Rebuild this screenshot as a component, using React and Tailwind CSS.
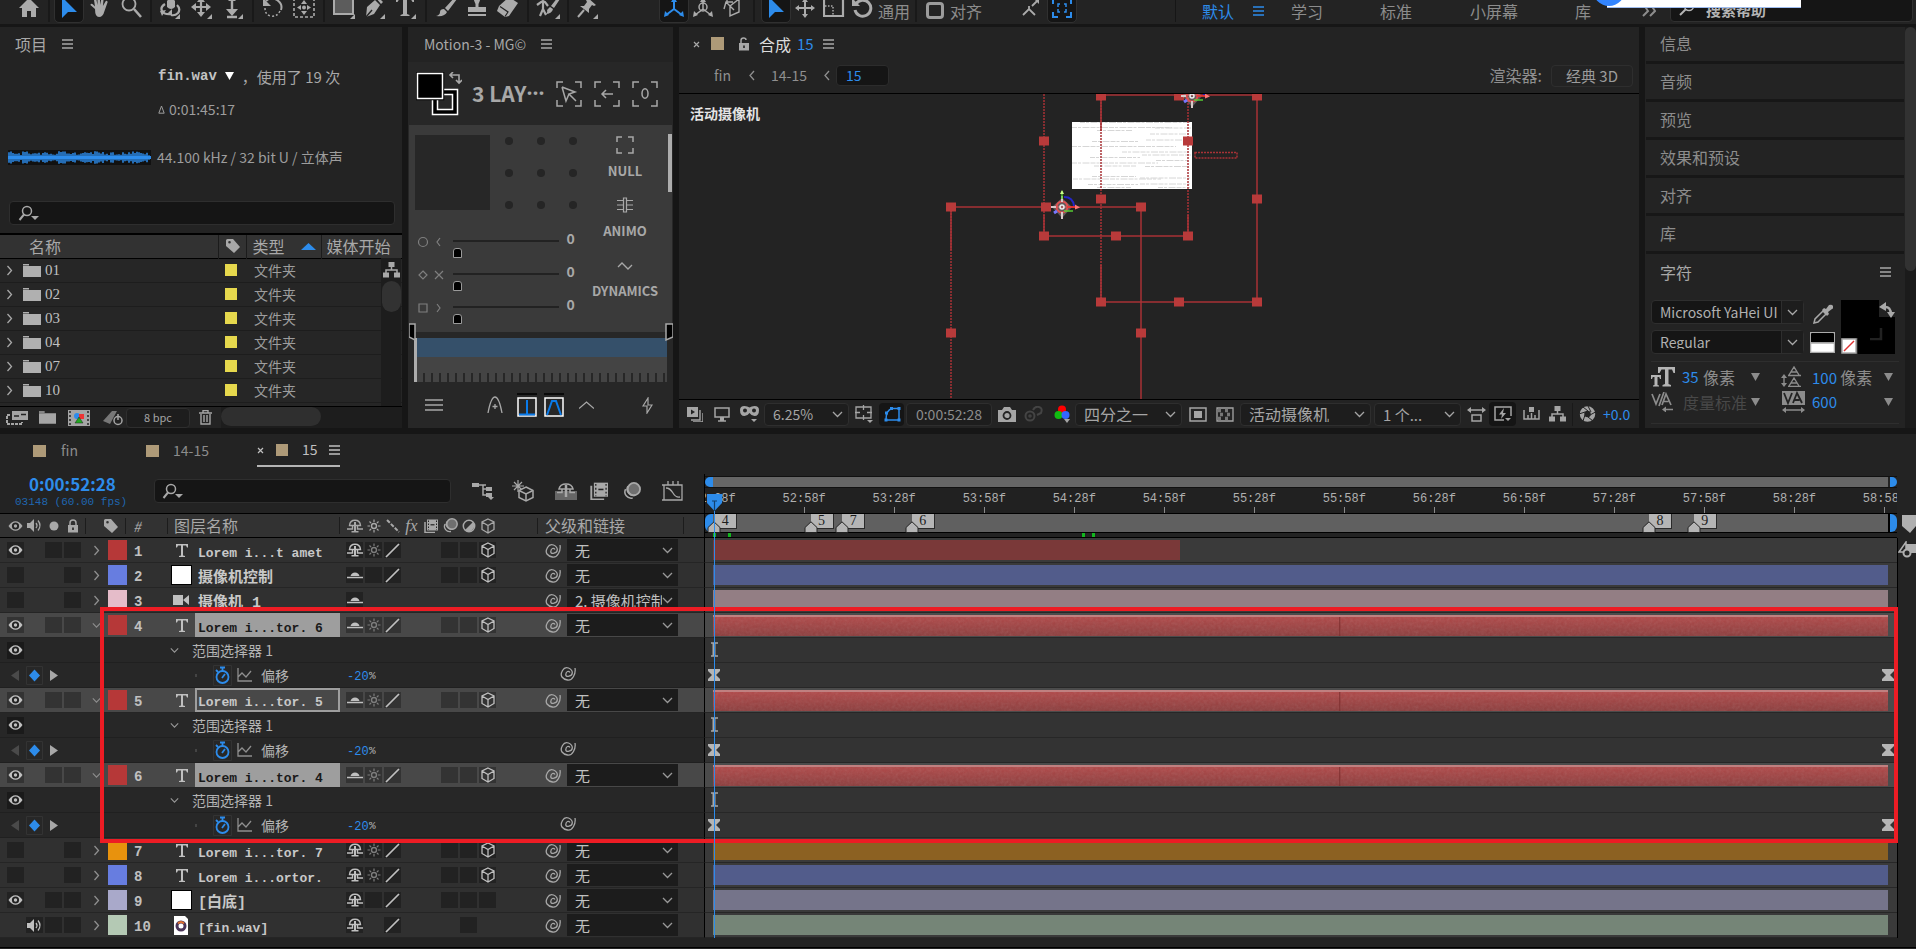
import React from "react";

const SANS = "font-['Noto_Sans_CJK_SC',sans-serif]";
const MONO = "font-['Liberation_Mono','Noto_Sans_CJK_SC',monospace]";

function Svg({ w = 20, h, box, className = "", children }) {
  const height = h || w;
  return (
    <svg
      aria-hidden="true"
      width={w}
      height={height}
      viewBox={box || `0 0 ${w} ${height}`}
      fill="none"
      stroke="currentColor"
      strokeWidth="1.5"
      className={`shrink-0 ${className}`}
    >
      {children}
    </svg>
  );
}
const F = { fill: "currentColor", stroke: "none" };

/* ---------- shared icons ---------- */
const Menu = ({ className = "" }) => (
  <Svg w={11} h={10} className={className}>
    <path d="M0 1h11M0 5h11M0 9h11" strokeWidth="1.4" />
  </Svg>
);
const CloseX = () => (
  <Svg w={7} h={7}>
    <path d="M1 1l5 5M6 1L1 6" strokeWidth="1.2" />
  </Svg>
);
const Chevron = ({ w = 11, className = "" }) => (
  <Svg w={w} h={7} box="0 0 11 7" className={className}>
    <path d="M1 1l4.500 4.500L10 1" strokeWidth="1.3" />
  </Svg>
);
const ChevRight = () => (
  <Svg w={7} h={11}>
    <path d="M1.500 1l4 4.500-4 4.500" strokeWidth="1.3" />
  </Svg>
);
const Tri = () => (
  <Svg w={9} h={8}>
    <path d="M0 0h9L4.500 8z" {...F} />
  </Svg>
);
const SearchDrop = () => (
  <Svg w={22} h={16}>
    <circle cx="9" cy="6" r="4.500" />
    <path d="M6 9.500L1.500 15" strokeWidth="2" />
    <path d="M13 11h8l-4 4z" {...F} />
  </Svg>
);
const Tag = () => (
  <Svg w={16} h={16}>
    <path fillRule="evenodd" d="M1 2.500Q1 1 2.500 1H8l7 8-6 6-8-7zM4.500 3a1.300 1.300 0 1 0 0 2.600 1.300 1.300 0 0 0 0-2.600z" {...F} />
  </Svg>
);
const Eye = () => (
  <Svg w={15} h={12}>
    <path d="M.5 6Q3.500 1.200 7.500 1.200T14.500 6Q11.500 10.800 7.500 10.800T.5 6z" {...F} />
    <circle cx="7.500" cy="6" r="3.600" fill="#222" stroke="none" />
    <circle cx="7.500" cy="6" r="1.700" {...F} />
  </Svg>
);
const Speaker = () => (
  <Svg w={17} h={15}>
    <path d="M1 5h3l4-4v13l-4-4H1z" {...F} />
    <path d="M10 5q2 2.500 0 5M12 2.500q4 5 0 10" strokeWidth="1.300" />
  </Svg>
);
const Lock = ({ open }) => (
  <Svg w={12} h={14}>
    <path d="M1 6h10v7.500H1z" {...F} />
    <path d={open ? "M3 6V3.500Q3 1 5.500 1T8 3" : "M3 6V4q0-3 3-3t3 3v2"} />
    <path d="M6 8.500v2.500" stroke="#222" strokeWidth="1.600" />
  </Svg>
);
const Shy = ({ flat }) => (
  <Svg w={16} h={14}>
    {flat ? (
      <>
        <path d="M3.500 8q1-3.500 4.500-3.500T12.500 8z" {...F} />
        <path d="M0 9.500h16" />
      </>
    ) : (
      <>
        <path d="M2.500 6.500Q3 1.200 8 1.200t5.500 5.300z" strokeWidth="1.400" />
        <path d="M8 3v9" strokeWidth="2" />
        <path d="M0 10h5.500V6.500M16 10h-5.500V6.500M4.500 12.800h7" strokeWidth="1.400" />
      </>
    )}
  </Svg>
);
const Sun = ({ dim }) => (
  <Svg w={14} className={dim ? "text-[#7d7d7d]" : ""}>
    <circle cx="7" cy="7" r="2.500" strokeWidth="1.400" />
    <path d="M7 .5v2.500M7 11v2.500M.5 7H3M11 7h2.500M2.500 2.500l1.600 1.600M9.900 9.900l1.600 1.600M2.500 11.500l1.600-1.600M9.900 4.100l1.600-1.600" strokeWidth="1.200" />
  </Svg>
);
const Slash = () => (
  <Svg w={15} h={15}>
    <path d="M1 14L14 1" strokeWidth="1.700" />
  </Svg>
);
const Cube = ({ w = 16 }) => (
  <Svg w={w} box="0 0 16 16">
    <path d="M8 1l6 3v7.500L8 15l-6-3.500V4zM2 4l6 3.500L14 4M8 7.500V15" strokeWidth="1.300" />
  </Svg>
);
const Film = ({ w = 14 }) => (
  <Svg w={w} h={w} box="0 0 14 14">
    <path d="M3 .5h11v11H3z" {...F} />
    <path d="M1 3v10.500h10" strokeWidth="1.500" />
    <path d="M4.500 1.500v9.500M12.500 1.500v9.500" stroke="#222" strokeDasharray="1.500 1.500" strokeWidth="1" />
    <path d="M6.500 5.800h4" stroke="#222" strokeWidth="1.200" />
  </Svg>
);
const Blur = ({ w = 16 }) => (
  <Svg w={w} box="0 0 16 16">
    <circle cx="10" cy="6" r="5.200" fill="#6f6f6f" />
    <path d="M5 3.500A5.300 5.300 0 0 0 11.500 11M3 6A5.300 5.300 0 0 0 9 13.500" strokeWidth="1.300" />
  </Svg>
);
const Adjust = () => (
  <Svg w={14}>
    <circle cx="7" cy="7" r="5.700" />
    <path d="M11 3A5.700 5.700 0 0 1 3 11z" {...F} />
  </Svg>
);
const Spiral = () => (
  <Svg w={16} h={15}>
    <path d="M10 6.500Q9 5 7.500 5.500T5.800 8.500 9 10.200 12.300 6.500 8.500 2 2.500 4.500 2 11 7.500 14 13.500 10.500 15 2" strokeWidth="1.300" />
  </Svg>
);
const Folder = ({ w = 18 }) => (
  <Svg w={w} h={15} box="0 0 18 15">
    <path d="M0 1h6v1.500H0zM0 3h18v11H0z" {...F} />
  </Svg>
);
const Tree = () => (
  <Svg w={17} h={16}>
    <path d="M5.500 0h6v5h-6zM0 10.500h6v5H0zM11 10.500h6v5h-6z" {...F} />
    <path d="M8.500 5v3M3 11V8h11v3" />
  </Svg>
);
const Pointer = ({ blue }) => (
  <Svg w={20} h={22} className={blue ? "text-[#2d8ceb]" : ""}>
    <path d="M3 0v21l6-6h9z" {...F} />
  </Svg>
);
const FourWay = () => (
  <Svg w={20}>
    <path d="M10 3v14M3 10h14" strokeWidth="2" />
    <path d="M10 0l3 4H7zM10 20l3-4H7zM0 10l4-3v6zM20 10l-4-3v6z" {...F} />
  </Svg>
);
const Corner = () => <path d="M21 22v-5l-5 5z" {...F} />;

/* ---------- top toolbar ---------- */
const TOOLS = [
  ["主页", <Svg w={22}><path d="M11 1l10 10h-3v9h-5v-6H9v6H4v-9H1z" {...F} /></Svg>],
  null,
  ["选取工具", <Pointer blue />, true],
  ["手形工具", <Svg w={22}><path d="M6 12L2 8.500Q1 7.500 2 7t2 .5l2 2L5 3q0-1.300 1-1.300T7.500 3l1 5V1.500Q8.500 0 9.800 0T11 1.500V8l1.300-6q.2-1.200 1.300-1t1 1.300L13.900 9l2.600-4.500q.6-1 1.500-.5t.5 1.500l-3 8.500q-1.500 6-5.500 6t-4-8z" {...F} /></Svg>],
  ["缩放工具", <Svg w={22}><circle cx="9" cy="7" r="6.500" strokeWidth="1.800" /><path d="M14 12l7 8" strokeWidth="2.500" /></Svg>],
  null,
  ["绕光标旋转工具", <Svg w={24} h={22}><path d="M8 4q4-5 8 0v6q-4 4-8 0z" {...F} /><path d="M6 7q-5 3-3 7t10 3M18 8q4 4 1 8-3 3-7 2" strokeWidth="2.200" /><path d="M13 12v7l-4-3zM1 14l6-1-4 6z" {...F} /><Corner /></Svg>],
  ["在光标下移动工具", <Svg w={22}><path d="M10 2v16M2 10h16" strokeWidth="2.200" /><path d="M10 0l4 5H6zM10 20l4-5H6zM0 10l5-4v8zM20 10l-5-4v8z" {...F} /><Corner /></Svg>],
  ["向光标方向推拉镜头工具", <Svg w={22}><path d="M10 0v14M5 20h10" strokeWidth="2.400" /><path d="M10 19l-6-7h12zM10 0l4 4H6z" {...F} /><Corner /></Svg>],
  null,
  ["旋转工具", <Svg w={22}><path d="M4 4q5-5 11-1t4 10" strokeWidth="2" /><path d="M18 14q-3 6-9 5t-6-8" strokeDasharray="2 2" /><path d="M1 1v8h8z" {...F} /></Svg>],
  ["锚点工具", <Svg w={22}><path d="M1 1h20v19H1z" strokeDasharray="3 2" strokeWidth="1.600" /><path d="M11 3l3 4H8zM11 18l3-4H8zM4 10.500L8 8v5zM18 10.500L14 8v5z" {...F} /><circle cx="11" cy="10.500" r="2" {...F} /></Svg>],
  null,
  ["矩形工具", <Svg w={22}><path d="M1 1h19v16H1z" fill="#5c5c5c" strokeWidth="2" /><path d="M22 22v-5l-5 5z" {...F} /></Svg>],
  ["钢笔工具", <Svg w={22}><path d="M2 20l1-10 8-7 5 5-6 9zM12 1l2-1 5 5-2 2z" {...F} /><path d="M2 20l6-7" stroke="#232323" strokeWidth="1.400" /><Corner /></Svg>],
  ["横排文字工具", <Svg w={22}><path d="M1 0h18v5h-1.500L16 2.500h-4V17l2.500 1v1h-9v-1L8 17V2.500H4L2.500 5H1z" {...F} /><Corner /></Svg>],
  null,
  ["画笔工具", <Svg w={22}><path d="M20 0l2 2-9 12-3-3zM9 12l3 3q-2 5-11 4 4-1 4-4t4-3z" {...F} /></Svg>],
  ["仿制图章工具", <Svg w={22}><path d="M8 0q3-1 6 0 1 2-1.500 7v3H20v5H2v-5h7.500V7Q7 2 8 0zM2 17h18v2H2z" {...F} /></Svg>],
  ["橡皮擦工具", <Svg w={22}><path d="M12 0l9 6-9 13-4 1-8-6 2-5z" {...F} /><path d="M3 9.500l8 5.500-3 4.500" stroke="#232323" strokeWidth="1.200" /></Svg>],
  null,
  ["Roto 笔刷工具", <Svg w={24} h={22}><circle cx="7" cy="2" r="2" {...F} /><path d="M1 8l4-3h4l3 4M7 6v6l-3 7M7 12l3 6" strokeWidth="2.200" /><path d="M22 0l2 2-6 9-3-2zM14 10l3 2q-1 5-8 5 3-1 2-4z" {...F} /><path d="M24 22v-5l-5 5z" {...F} /></Svg>],
  null,
  ["人偶位置控点工具", <Svg w={22}><path d="M10 0l9 8-2 1-2-1-3 4v4L3 9h4l3-4-1-2zM7 13L1 20" {...F} /><path d="M7 13l-6 7" strokeWidth="2" /><Corner /></Svg>],
];

const Sep = () => <span className="mx-[5px] h-6 w-0.5 shrink-0 bg-[#191919]" />;

function ToolButton({ label, active, children }) {
  return (
    <button
      type="button"
      aria-label={label}
      className={`flex h-7 w-7 shrink-0 items-center justify-center rounded-sm ${active ? "bg-[#151515] outline outline-[#303030]" : ""}`}
    >
      {children}
    </button>
  );
}

function Toolbar() {
  return (
    <header className="relative flex h-6 shrink-0 items-end overflow-hidden bg-[#232323] pb-[2px] pl-[15px] text-[#ababab]">
      <nav className="flex w-[645px] shrink-0 items-end">
        {TOOLS.map((t, i) =>
          t ? (
            <span key={i} className={TOOLS[i - 1] ? "ml-[3px]" : ""}>
              <ToolButton label={t[0]} active={t[2]}>{t[1]}</ToolButton>
            </span>
          ) : (
            <Sep key={i} />
          )
        )}
      </nav>
      <div className="flex shrink-0 items-end gap-px">
        <ToolButton label="本地轴模式" active>
          <Svg w={22} className="text-[#2d8ceb]"><path d="M11 3v9l-8 6M11 12l8 6" strokeWidth="2" /><path d="M11 0l3 5H8zM1 20l1-6 4 4zM21 20l-1-6-4 4z" {...F} /></Svg>
        </ToolButton>
        <ToolButton label="世界轴模式">
          <Svg w={22}><circle cx="11" cy="10" r="4" /><path d="M11 3v9l-8 6M11 12l8 6" strokeWidth="1.500" /><path d="M11 0l3 5H8zM1 20l1-6 4 4zM21 20l-1-6-4 4z" {...F} /></Svg>
        </ToolButton>
        <ToolButton label="视图轴模式">
          <Svg w={22}><path d="M3 12L5 5h7M9 9l9-7v13l-9 4zM5 5l8 8M3 2l3 0v3" strokeWidth="1.400" /></Svg>
        </ToolButton>
      </div>
      <span className="mx-[7px] h-6 w-0.5 shrink-0 bg-[#191919]" />
      <div className="flex shrink-0 items-end gap-px">
        <ToolButton label="选择" active><Pointer blue /></ToolButton>
        <ToolButton label="移动"><FourWay /></ToolButton>
        <ToolButton label="缩放"><Svg w={22}><path d="M1 1h19v18H1z" strokeWidth="2.200" /><path d="M2 9h8v9" strokeDasharray="1.500 1.500" /></Svg></ToolButton>
        <ToolButton label="旋转"><Svg w={22}><path d="M4 7a8 8 0 1 1-1 6" strokeWidth="3" /><path d="M0 1v8h8z" {...F} /></Svg></ToolButton>
        <span className="flex h-[22px] items-center pb-px text-base leading-[18px] text-[#8c8c8c]">通用</span>
      </div>
      <Sep />
      <label className="flex h-[22px] shrink-0 items-center gap-1 pb-px pl-1 text-base leading-[18px] text-[#8c8c8c]">
        <input type="checkbox" className="mr-[2px] h-[17px] w-[18px] appearance-none rounded-sm border-[3px] border-[#9b9b9b]" />
        对齐
      </label>
      <div className="flex shrink-0 gap-[2px] pl-[36px]">
        <ToolButton label="对齐边缘"><Svg w={22}><path d="M2 18l6-6 6 6M8 12V9M11 9l6-6" strokeWidth="1.800" /><path d="M12 1h6v6z" {...F} /></Svg></ToolButton>
        <ToolButton label="对齐特征" active>
          <Svg w={20} className="text-[#2d8ceb]"><path d="M1 6V1h5M14 1h5v5M19 14v5h-5M6 19H1v-5" strokeWidth="2" /><path d="M6 9V6h2M12 6h2v3M14 11v3h-2M8 14H6v-3" /></Svg>
        </ToolButton>
      </div>
      <nav className="ml-auto flex h-[22px] shrink-0 items-center border-l border-[#161616] pb-px pl-[26px] text-base leading-[18px] text-[#8c8c8c]">
        <a href="#default" className="w-[51px] text-[#2d8ceb]">默认</a>
        <Menu className="mr-[27px] text-[#2d8ceb]" />
        <a href="#learn" className="w-[89px]">学习</a>
        <a href="#standard" className="w-[90px]">标准</a>
        <a href="#small" className="w-[105px]">小屏幕</a>
        <a href="#lib" className="w-[67px]">库</a>
        <Svg w={14} h={12} className="mr-[14px]"><path d="M1 11l5-5-4-6M8 11l5-5-4-6" strokeWidth="2" /></Svg>
      </nav>
      <label className="flex h-7 w-[243px] shrink-0 items-center gap-3 rounded-sm border border-[#303030] bg-[#151515] px-2 text-[15px] text-[#b4b4b4]">
        <Svg w={15} h={16}><circle cx="10" cy="6" r="4.500" /><path d="M7 9l-6 6" strokeWidth="2" /></Svg>
        <input aria-label="搜索帮助" placeholder="搜索帮助" className="w-full bg-transparent pt-1 font-bold placeholder:text-[#b4b4b4]" />
      </label>
      <span className="mr-[3px]" />
      <span className="absolute top-0 right-[115px] h-[8px] w-[194px] border-b border-[#9fbdf0] bg-white" />
      <span className="absolute -top-[26px] right-[291px] h-8 w-8 rounded-full bg-[#3385ff]" />
    </header>
  );
}

/* ---------- project panel ---------- */
const wave = Array.from({ length: 71 }, (_, i) => {
  const r = Math.abs(Math.sin(i * 12.9898 + 4.1) * 43758.5453) % 1;
  const swell = Math.sin(i * 0.33) + Math.sin(i * 0.71 + 1);
  const a = 2.2 + r * 3.2 + Math.max(0, swell) * 1.2;
  return `M${i * 2 + 1} ${(7.5 - a).toFixed(1)}V${(7.5 + a).toFixed(1)}`;
}).join("");

function ProjectPanel() {
  return (
    <section className="flex w-[402px] shrink-0 flex-col bg-[#232323]">
      <h2 className="flex h-[35px] shrink-0 items-center gap-[15px] pb-[2px] pl-[15px] text-base leading-none">
        项目 <Menu />
      </h2>
      <div className="flex h-[30px] items-center pb-[2px] pl-[158px] text-[14px] leading-none">
        <b className={`${MONO} text-[#c4c4c4]`}>fin.wav</b>
        <span className="mx-2 text-white"><Tri /></span>
        <span className="text-[15px] whitespace-nowrap">，使用了 19 次</span>
      </div>
      <div className="flex h-9 items-center gap-1 pb-[2px] pl-[158px] text-[14px] leading-none text-[#9d9d9d]">
        <Svg w={7} h={9}><path d="M.8 8.200L3.500 1l2.700 7.200z" strokeWidth="1" /></Svg>0:01:45:17
      </div>
      <div className="flex h-[60px] items-center gap-[6px] pb-[2px] pl-2 text-[14px] leading-none text-[#9d9d9d]">
        <span className="bg-[#111] text-[#2d8ceb]">
          <Svg w={143} h={15}><path d={wave} strokeWidth="1.500" /><path d="M0 7.500h143" strokeWidth="3" /></Svg>
        </span>
        <span className="whitespace-nowrap">44.100 kHz / 32 bit U / 立体声</span>
      </div>
      <label className="mr-[7px] mb-2 ml-[9px] mt-[13px] flex h-6 shrink-0 items-center rounded-sm border border-[#2e2e2e] bg-[#151515] pl-2">
        <SearchDrop />
        <input aria-label="搜索项目" className="min-w-0 flex-1 bg-transparent" />
      </label>
      <div className="flex min-h-0 flex-1 border-t-2 border-b border-black bg-[#232323]">
        <div className="relative min-w-0 flex-1 overflow-hidden">
          <table className="w-full table-fixed border-collapse text-left">
            <thead>
              <tr className="h-[23px] border-b border-black bg-[#323232] text-base leading-none">
                <th className="w-[218px] pl-[29px] font-normal">名称</th>
                <th className="w-[28px] border-x border-[#1b1b1b] pl-[6px]"><Tag /></th>
                <th className="w-[75px] border-r border-[#1b1b1b] pl-[6px] font-normal">
                  <span className="flex items-center gap-4">
                    类型
                    <Svg w={15} h={7} className="text-[#2d8ceb]"><path d="M0 7l7.500-7L15 7z" {...F} /></Svg>
                  </span>
                </th>
                <th className="pl-[5px] font-normal whitespace-nowrap">媒体开始</th>
              </tr>
            </thead>
            <tbody>
              {["01", "02", "03", "04", "07", "10"].map((n) => (
                <tr key={n} className="h-6 border-b border-[#1d1d1d] bg-[#262626] leading-none">
                  <td className="pl-[6px]">
                    <span className="flex items-center">
                      <ChevRight />
                      <span className="ml-[10px] text-[#b0b0b0]"><Folder /></span>
                      <span className="ml-1 font-['Liberation_Serif',serif] text-[15px] text-[#c0c0c0]">{n}</span>
                    </span>
                  </td>
                  <td className="pl-[7px]"><span className="block h-3 w-3 bg-[#e6d84d]" /></td>
                  <td className="pl-2 text-[14px] text-[#9d9d9d]">文件夹</td>
                  <td />
                </tr>
              ))}
              <tr className="bg-[#262626]"><td colSpan="4" className="h-2" /></tr>
            </tbody>
          </table>
          <div className="absolute top-[23px] right-[1px] bottom-0 flex w-5 flex-col items-center gap-[3px] bg-[#1d1d1d] pt-1">
            <Tree />
            <span className="h-[31px] w-[19px] rounded-full bg-[#323232]" />
          </div>
        </div>
      </div>
      <footer className="flex h-[21px] shrink-0 items-center pl-[6px] text-[#a5a5a5]">
        <Svg w={22} h={14}><path d="M6 0h16v9H6z" {...F} /><path d="M4 4H1v9h15v-2" strokeWidth="2" strokeDasharray="3 1" /><path d="M8 5h5M15 3.500h5" stroke="#232323" strokeWidth="1.600" /></Svg>
        <span className="ml-[11px]"><Folder w={17} /></span>
        <Svg w={22} h={16} className="ml-3"><path d="M0 0h22v16H0z" {...F} /><path d="M2 1v14M20 1v14" stroke="#232323" strokeDasharray="2 2" /><circle cx="9" cy="6" r="3" fill="#2d8ceb" stroke="none" /><path d="M11 4h5v5h-5z" fill="#e33" stroke="none" /><path d="M7 13l4-6 4 6z" fill="#2a2" stroke="#232323" strokeWidth=".5" /></Svg>
        <Svg w={22} h={16} className="ml-3 text-[#777]"><path d="M1 11L10 1h5L8 14z" {...F} /><circle cx="16" cy="10.500" r="4" stroke="#a5a5a5" /><path d="M16 4v6" stroke="#a5a5a5" /></Svg>
        <button type="button" className="ml-[2px] h-5 w-16 rounded-sm border border-[#2e2e2e] bg-[#1d1d1d] text-[11px] leading-none">8 bpc</button>
        <Svg w={13} h={15} className="ml-[9px]"><path d="M0 3h13M4 2.500v-2h5v2M2 4v10h9V4M5 5v7M8 5v7" strokeWidth="1.400" /></Svg>
        <span className="ml-[9px] flex h-full flex-1 bg-[#1d1d1d]"><span className="h-[19px] w-[100px] rounded-full bg-[#2f2f2f]" /></span>
      </footer>
    </section>
  );
}

/* ---------- Motion panel ---------- */
const Bracket = ({ children }) => (
  <Svg w={26}>
    <path d="M1 7V1h6M19 1h6v6M25 19v6h-6M7 25H1v-6" strokeWidth="1.500" />
    {children}
  </Svg>
);

function Slider({ label, mark }) {
  return (
    <label className="flex h-[33px] items-start">
      <span className="flex w-[41px] gap-1 pt-[10px] text-[#7f7f7f]">{mark}</span>
      <input
        aria-label={label}
        type="range"
        defaultValue="0"
        className="h-[31px] w-[106px] appearance-none bg-transparent [&::-webkit-slider-runnable-track]:h-[2px] [&::-webkit-slider-runnable-track]:bg-[#222] [&::-webkit-slider-thumb]:mt-[8px] [&::-webkit-slider-thumb]:h-[10px] [&::-webkit-slider-thumb]:w-[9px] [&::-webkit-slider-thumb]:appearance-none [&::-webkit-slider-thumb]:rounded-t-[3px] [&::-webkit-slider-thumb]:border [&::-webkit-slider-thumb]:border-[#9a9a9a] [&::-webkit-slider-thumb]:bg-black"
      />
      <b className="w-6 pt-[5px] text-center text-[14px] leading-[16px]">0</b>
    </label>
  );
}

function MotionPanel() {
  const fx = [
    ["NULL", <Svg w={18}><path d="M1 6V1h5M12 1h5v5M17 12v5h-5M6 17H1v-5" strokeWidth="1.500" /></Svg>],
    ["ANIMO", <Svg w={16} h={16}><path d="M0 3.500h6M10 3.500h6M0 8h6M10 8h6M0 12.500h6M10 12.500h6M6.500 1h3v14h-3z" strokeWidth="1.200" /></Svg>],
    ["DYNAMICS", <Svg w={16} h={16}><path d="M1 10l4-4 6 6 4-4" strokeWidth="1.300" /></Svg>],
  ];
  return (
    <section className="flex w-[265px] shrink-0 flex-col bg-[#272727]">
      <h2 className="flex h-[35px] shrink-0 items-center bg-[#232323] pb-[2px] pl-[16px] text-[14px] leading-none whitespace-nowrap">
        <span className="w-[117px]">Motion-3 - MG©</span> <Menu />
      </h2>
      <div className="flex h-[63px] shrink-0 items-center gap-[10px] pl-2">
        <Svg w={46} h={44}>
          <path d="M16.500 17.500h25v25h-25z" fill="#000" stroke="#fff" />
          <path d="M21.500 22.500h15v15h-15z" fill="#272727" stroke="#fff" />
          <path d="M.5.5h27v27H.5z" fill="#000" stroke="#000" />
          <path d="M1.500 1.500h25v25h-25z" fill="#000" stroke="#fff" />
          <path d="M35 3h8v7M40 8l3 3 3-3M37 0l-3 3 3 3" strokeWidth="1.600" />
        </Svg>
        <strong className="flex w-[74px] shrink-0 text-[21px] leading-none whitespace-nowrap">3 LAY<span className="font-['Open_Sans',sans-serif]">···</span></strong>
        <div className="flex gap-3">
          <Bracket><path d="M6 6l13 5-6 2 7 7M6 6l4 14 3-7" strokeWidth="1.500" /></Bracket>
          <Bracket><path d="M19 13H8M12 9l-4 4 4 4" strokeWidth="1.500" /></Bracket>
          <Bracket><ellipse cx="13" cy="12.500" rx="3" ry="4.800" strokeWidth="1.500" /></Bracket>
        </div>
      </div>
      <div className="mx-px flex h-[207px] shrink-0 bg-[#3a3a3a]">
        <div className="flex w-[173px] flex-col pl-[6px]">
          <div className="flex gap-[15px] pt-[10px]">
            <div className="h-[75px] w-[75px] bg-[#272727]" />
            <div className="grid h-[75px] grid-cols-3 content-between gap-x-6 pt-[2px] pb-px">
              {Array.from({ length: 9 }, (_, i) => (
                <span key={i} className="h-2 w-2 rounded-full bg-[#252525]" />
              ))}
            </div>
          </div>
          <div className="pt-[15px]">
            <Slider label="缓入" mark={<><Svg w={14}><circle cx="8" cy="7" r="4.500" strokeWidth="1.200" /></Svg><Svg w={12} h={14}><path d="M7 3L4 7l3 4" strokeWidth="1.200" /></Svg></>} />
            <Slider label="缓动" mark={<><Svg w={14}><path d="M8 3l4 4-4 4-4-4z" strokeWidth="1.200" /></Svg><Svg w={12} h={14}><path d="M2 3l4 4-4 4M10 3L6 7l4 4" strokeWidth="1.200" /></Svg></>} />
            <Slider label="缓出" mark={<><Svg w={14}><path d="M4 3h8v8H4z" strokeWidth="1.200" /></Svg><Svg w={12} h={14}><path d="M4 3l3 4-3 4" strokeWidth="1.200" /></Svg></>} />
          </div>
        </div>
        <div className="flex flex-1 flex-col items-center">
          {fx.map(([n, icon]) => (
            <button type="button" key={n} className="flex h-[60px] flex-col items-center justify-end text-[13px] leading-none font-bold">
              <span className="flex h-[22px] items-center">{icon}</span>
              <span className="pt-[8px] pb-[8px]">{n}</span>
            </button>
          ))}
        </div>
        <span className="mt-[9px] h-[58px] w-1 bg-[#adadad]" />
      </div>
      <div className="relative mx-[6px] mt-[6px] flex h-11 shrink-0 border-l-[3px] border-[#adadad]">
        <Svg w={8} h={18} className="absolute -top-[15px] -left-[8px]"><path d="M0 1h6v16L0 14z" fill="#000" /></Svg>
        <Svg w={8} h={18} className="absolute -top-[15px] -right-[6px]"><path d="M8 1H1v16l7-3z" fill="#000" /></Svg>
        <div className="flex flex-1 flex-col">
          <div className="h-[19px] bg-[#35506a]" />
          <div className="flex flex-1 items-end bg-[#444]">
            <div className="h-[9px] w-full bg-[repeating-linear-gradient(90deg,#444_0_6px,#272727_6px_8px)]" />
          </div>
        </div>
      </div>
      <footer className="flex flex-1 items-center pl-[17px]">
        <Svg w={18} h={12}><path d="M0 1h18M0 6h18M0 11h18" strokeWidth="1.300" /></Svg>
        <Svg w={16} h={18} className="ml-[44px]"><path d="M1 17Q4 1 8 1t7 16M8 8v5M5.500 10.500h5" strokeWidth="1.300" /></Svg>
        <Svg w={20} h={24} className="ml-[14px]"><path d="M0 1h20" stroke="#000" /><path d="M1 5h18v18H1z" stroke="#fff" /><path d="M10 7v15M2 21.500h16" stroke="#0a7bea" strokeWidth="2" /></Svg>
        <Svg w={20} h={24} className="ml-[7px]"><path d="M0 1h20" stroke="#000" /><path d="M1 5h18v18H1z" stroke="#fff" /><path d="M3 22L8 8h4l5 14" stroke="#0a7bea" strokeWidth="2" /></Svg>
        <Svg w={15} h={8} className="ml-[15px]"><path d="M0 7.500L7.500 1 15 7.500" strokeWidth="1.300" /></Svg>
        <Svg w={11} h={17} className="ml-[48px]"><path d="M6 1L1 9h4v7l5-8H6z" strokeWidth="1.200" /></Svg>
      </footer>
    </section>
  );
}

/* ---------- composition viewer ---------- */
const HANDLES = [
  [1044, 141], [1188, 141], [1044, 236], [1116, 236], [1188, 236],
  [1101, 96], [1179, 96], [1257, 96], [1101, 199], [1257, 199], [1101, 302], [1179, 302], [1257, 302],
  [951, 207], [1046, 207], [1141, 207], [951, 333], [1141, 333],
];
const TEXT_LINES = [
  [1080, 122, 110], [1072, 127, 100], [1155, 127.500, 36], [1097, 130, 35], [1150, 133.500, 36], [1146, 139.500, 46], [1092, 141, 46], [1072, 146, 104], [1122, 151.500, 66], [1142, 154.500, 50], [1090, 157, 50], [1156, 160, 32], [1072, 162.500, 86], [1094, 165.500, 42], [1145, 166, 44], [1092, 176, 44], [1073, 178.500, 88], [1140, 177.500, 50], [1088, 184, 50], [1140, 183.500, 50], [1097, 187, 34], [1158, 187, 32],
];
const Gizmo = ({ x, y }) => (
  <g transform={`translate(${x} ${y})`}>
    <path d="M-10 0L0-9 10 0 0 11z" fill="#d9c4c4" stroke="none" opacity=".35" />
    <circle r="5.500" stroke="#e05050" strokeWidth="2" />
    <circle r="2" stroke="#eee" strokeWidth="1.500" />
    <path d="M0-11V-5M0 5v7M-11 0h5" stroke="#d8c8c8" strokeWidth="2" />
    <path d="M5 0h9" stroke="#e33" strokeWidth="1.600" />
    <path d="M13-2.500L18 .5l-5 2z" fill="#f77" stroke="none" />
    <path d="M0-16v8M2 4h9" stroke="#5c3" strokeWidth="1.400" />
    <path d="M-2-13L0-17l2 4z" fill="#cf8" stroke="none" />
    <path d="M2-10q9 0 10 9" stroke="#2426c8" strokeWidth="2" />
    <path d="M-8 6l3-2" stroke="#77f" strokeWidth="3" />
  </g>
);

function ViewSelect({ label, width, children, size = "text-base" }) {
  return (
    <span className={`relative flex h-[23px] shrink-0 items-center ${width}`}>
      <select aria-label={label} className={`h-full w-full appearance-none rounded-sm border border-[#2e2e2e] bg-[#1d1d1d] pl-2 leading-none text-[#a5a5a5] ${size}`}>
        <option>{children}</option>
      </select>
      <Chevron className="pointer-events-none absolute right-[6px]" />
    </span>
  );
}

function CompPanel() {
  return (
    <section className="flex min-w-0 flex-1 flex-col bg-[#232323]">
      <h2 className="flex h-[35px] shrink-0 items-center pb-[2px] pl-[14px] text-base leading-none">
        <span className="w-[18px] pt-[2px]"><CloseX /></span>
        <span className="mr-[14px] h-[13px] w-[13px] bg-[#ae9a78]" />
        <Lock open />
        <span className="ml-[9px] text-[#dcdcdc]">合成</span>
        <span className="mx-[6px] text-[15px] text-[#2d8ceb]">15</span>
        <Menu className="ml-[3px]" />
      </h2>
      <nav className="flex h-[31px] shrink-0 items-start pt-[3px] pl-[35px] text-[14px] text-[#8f8f8f]">
        <a href="#fin" className="w-[35px] leading-[21px]">fin</a>
        <span className="w-[22px] pt-[5px]"><Svg w={6} h={11}><path d="M5 1L1 5.500 5 10" strokeWidth="1.300" /></Svg></span>
        <a href="#c1415" className="w-[53px] leading-[21px]">14-15</a>
        <span className="w-3 pt-[5px]"><Svg w={6} h={11}><path d="M5 1L1 5.500 5 10" strokeWidth="1.300" /></Svg></span>
        <a href="#c15" className="w-[53px] rounded-sm border border-[#2c2c2c] bg-[#151515] pl-[9px] leading-[19px] text-[#2d8ceb]">15</a>
        <span className="ml-auto pr-[9px] text-base leading-[21px]">渲染器:</span>
        <button type="button" className="mr-[6px] w-[82px] rounded-sm border border-[#2e2e2e] text-[15px] leading-[20px] whitespace-nowrap text-[#9b9b9b]">经典 3D</button>
      </nav>
      <div className="relative min-h-0 flex-1 overflow-hidden border-y border-black">
        <svg className="block h-full w-full" viewBox="679 94 960 305" preserveAspectRatio="xMidYMid slice" fill="none">
          <path d="M1072 122h120v67h-120z" fill="#fff" />
          {TEXT_LINES.map(([x, y, w], i) => (
            <path key={i} d={`M${x} ${y + 0.5}h${Math.min(w, 1191 - x)}`} stroke="#d6d6d6" strokeWidth="1" strokeDasharray="5 1 3 1.500 7 1" />
          ))}
          <g stroke="#a83236" strokeWidth="1.500">
            <path d="M1044 94V236M1188 94V236M1101 96V302M951 207V400" strokeDasharray="2 1" />
            <path d="M1044 236h144M1101 95h156V302H1101M951 207h190V400" />
            <path d="M1044 215v21M1188 215v21M1101 95v36M1101 265v37M951 207v43" />
            <path d="M1195 152.500h42v5.500h-42z" strokeDasharray="2 1" />
          </g>
          {HANDLES.map(([x, y], i) => (
            <path key={i} d={`M${x - 5} ${y - 4.500}h10v9h-10z`} fill="#b83a3a" />
          ))}
          <Gizmo x={1062} y={207} />
          <Gizmo x={1192} y={96} />
        </svg>
        <span className="absolute top-[11px] left-[11px] text-[14px] leading-4 font-bold text-[#e4e4e4]">活动摄像机</span>
      </div>
      <footer className="flex h-[28px] shrink-0 items-center pl-2 text-[#a5a5a5]">
        <Svg w={16} h={15}><path d="M0 0h11v10H0z" {...F} /><path d="M4 13h9V3M6 15h10V6" strokeWidth="1.400" /><path d="M4 2.500v5L8 5z" fill="#232323" stroke="none" /></Svg>
        <Svg w={16} h={15} className="ml-[11px]"><path d="M1 1h14v9H1zM4 14h8" /><path d="M6 10h4v4H6z" {...F} /></Svg>
        <Svg w={19} h={18} className="ml-[10px]"><path fillRule="evenodd" d="M0 5Q0 1 4.500 1q3 0 5 1.500Q11.500 1 14.500 1 19 1 19 5q0 6-4.500 6-3 0-5-3-2 3-5 3Q0 11 0 5zM5 3.500a2 2 0 1 0 0 4 2 2 0 0 0 0-4zM14 3.500a2 2 0 1 0 0 4 2 2 0 0 0 0-4zM11 14h6l-3 3z" {...F} /></Svg>
        <span className="ml-[5px] text-[14px]"><ViewSelect label="放大率" width="w-[85px]" size="text-[14px]">6.25%</ViewSelect></span>
        <Svg w={18} h={18} className="ml-[6px]"><path d="M1 2h15v11H1zM8.500 0v5M8.500 10v5M0 7.500h5M12 7.500h5" strokeWidth="1.300" /><path d="M12 15h6l-3 3z" {...F} /></Svg>
        <button type="button" aria-label="切换蒙版和形状路径可见性" className="ml-[6px] flex h-[23px] w-[25px] items-center justify-center rounded-sm bg-[#151515] text-[#2d8ceb]">
          <Svg w={18} h={16}><path d="M3 14Q3 4 9 2.500h7V14H3" /><path d="M1.500 12.500h3v3h-3zM14.500 12.500h3v3h-3zM14.500 1h3v3h-3zM7 1h3v3H7zM2 5.500h3v3H2z" {...F} /></Svg>
        </button>
        <button type="button" className="ml-[2px] h-[23px] w-[86px] rounded-sm border border-[#2e2e2e] bg-[#1d1d1d] text-[14px] leading-none text-[#8c8c8c]">0:00:52:28</button>
        <Svg w={18} h={15} className="ml-[6px]"><path d="M0 3h4l2-3h6l2 3h4v12H0z" {...F} /><circle cx="9" cy="8.500" r="3.500" stroke="#232323" strokeWidth="1.800" /></Svg>
        <Svg w={19} h={16} className="ml-[8px] text-[#444]"><circle cx="6" cy="10" r="4.500" strokeWidth="2" /><circle cx="6" cy="10" r="1" /><path d="M9 4q2-4 6-3t2 6l-4 2" strokeWidth="2" /></Svg>
        <Svg w={17} h={18} className="ml-[11px]"><circle cx="8" cy="4.500" r="4" fill="#f00" stroke="none" /><circle cx="4.500" cy="10" r="4" fill="#1b1" stroke="none" /><circle cx="11.500" cy="10" r="4" fill="#36f" stroke="none" /><path d="M10 14h6l-3 4z" {...F} /></Svg>
        <span className="ml-1"><ViewSelect label="分辨率" width="w-[107px]">四分之一</ViewSelect></span>
        <Svg w={18} h={15} className="ml-[7px]"><path d="M1 1h16v13H1z" /><path d="M5 4h8v7H5z" {...F} /></Svg>
        <Svg w={18} h={15} className="ml-[9px]"><path d="M1 1h16v13H1z" strokeWidth="1.300" /><path d="M2 3.500h14M4 7.500h12M2 11.500h14" strokeWidth="3.500" strokeDasharray="3 4" className="text-[#777]" stroke="currentColor" /></Svg>
        <span className="ml-[6px]"><ViewSelect label="3D 视图" width="w-[131px]">活动摄像机</ViewSelect></span>
        <span className="ml-[3px]"><ViewSelect label="视图布局" width="w-[87px]" size="text-[15px]">1 个...</ViewSelect></span>
        <Svg w={19} h={15} className="ml-[6px]"><path d="M2 3h15M5 8h9v6H5z" /><path d="M0 3l4-3v6zM19 3l-4-3v6z" {...F} /></Svg>
        <button type="button" aria-label="快速预览" className="ml-[3px] flex h-6 w-[27px] items-center justify-center rounded-sm bg-[#151515]">
          <Svg w={18} h={16}><path d="M17 10V1H1v13h9" /><path d="M10 2L5 8.500h3L7 13l5-6H9zM11 12h6l-3 3z" {...F} /></Svg>
        </button>
        <Svg w={17} h={15} className="ml-[7px]"><path d="M1 3v9h15V3M5 8v4M8.500 6v6M12 8v4" /><path d="M6 0h5v5H6z" {...F} /></Svg>
        <span className="ml-[9px]"><Tree /></span>
        <span className="mx-[6px] h-[23px] w-px bg-[#191919]" />
        <Svg w={17} h={16}><circle cx="8.500" cy="8" r="5.500" strokeWidth="4.500" /><path d="M9 0l3 6M16.500 6L11 9M14 15l-5-4M4 15l2-6M0 8l6-2M4 1l5 4" stroke="#232323" strokeWidth="1" /></Svg>
        <span className="ml-[7px] text-[14px] leading-none text-[#2d8ceb]">+0.0</span>
      </footer>
    </section>
  );
}

/* ---------- right side panels ---------- */
function CharSelect({ label, value }) {
  return (
    <span className="relative flex h-6 items-center">
      <select aria-label={label} className="h-full w-full appearance-none rounded-sm border border-[#2e2e2e] bg-[#151515] pl-2 text-[14px] leading-none text-[#b0b0b0]">
        <option>{value}</option>
      </select>
      <span className="pointer-events-none absolute right-px flex h-[22px] w-[22px] items-center justify-center border-l border-[#2e2e2e] bg-[#1d1d1d]"><Chevron /></span>
    </span>
  );
}

function SidePanels() {
  return (
    <aside className="flex w-[271px] shrink-0">
      <div className="flex w-[260px] flex-col bg-[#232323]">
        {["信息", "音频", "预览", "效果和预设", "对齐", "库"].map((t) => (
          <h2 key={t} className="mx-px flex h-[38px] shrink-0 items-center border-b-[3px] border-[#171717] pb-[2px] pl-[14px] text-base leading-none text-[#8c8c8c] first:h-[37px]">
            {t}
          </h2>
        ))}
        <h2 className="flex h-[38px] shrink-0 items-center justify-between pr-[14px] pb-[2px] pl-[15px] text-base leading-none">
          字符 <Menu />
        </h2>
        <div className="flex flex-1 flex-col px-[6px] pt-[8px]">
          <div className="flex h-[62px] shrink-0 border-b border-[#2e2e2e]">
            <div className="flex w-[153px] flex-col gap-[6px]">
              <CharSelect label="字体" value="Microsoft YaHei UI" />
              <CharSelect label="字形" value="Regular" />
            </div>
            <div className="ml-[5px] flex w-[27px] flex-col items-center gap-[7px] pt-1">
              <Svg w={21} h={21}><path d="M2 19l1-4 8-8 3 3-8 8z" /><path d="M10 6l2-2 2 1 3-4q3-1 4 1t-1 3l-4 3 1 2-2 2z" {...F} /></Svg>
              <Svg w={25} h={21}><path d="M.5.5h24v20H.5z" fill="#fff" stroke="#aaa" /><path d="M1.500 1.500h22v8.500h-22z" fill="#000" stroke="#000" strokeWidth="1" /><path d="M1 11h23" stroke="#aaa" /></Svg>
            </div>
            <Svg w={55} h={55} className="ml-[4px]">
              <path d="M18 17h37v37H18z" fill="#000" stroke="none" />
              <path d="M30 39h11V28" stroke="#222" strokeWidth="2.500" />
              <path d="M1 0h38v38H1zM39 17V0z" fill="#000" stroke="none" />
              <path d="M39 0h16v17H39z" fill="#232323" stroke="none" />
              <path d="M44 7q7-1 7 8" strokeWidth="2.500" />
              <path d="M39 7l7-5v9zM47 12h8l-4 6z" {...F} />
              <path d="M2 39h14v14H2z" fill="#fff" stroke="#aaa" />
              <path d="M4 51l10-10" stroke="#d33" />
            </Svg>
          </div>
          <div className="grid h-[62px] shrink-0 auto-rows-[25px] grid-cols-[31px_20px_44px_35px_31px_1fr_20px] content-start items-center border-b border-[#2e2e2e] pt-[2px] text-[15px] leading-none text-[#8c8c8c]">
            <Svg w={24} h={20} className="text-[#b5b5b5]"><path d="M7 0h17v6h-1.500L21 2.500h-3.500V17l2.500 1v1.500h-8.500V18l2.500-1V2.500h-3.500L8.500 6H7zM0 8h10v4H9l-.8-2H6.500v8l1.500.5v1H2v-1l1.500-.5v-8H1.800L1 12H0z" {...F} /></Svg>
            <span className="text-[#2d8ceb]">35</span>
            <span className="pl-px text-base">像素</span>
            <span className="pl-[5px]"><Tri /></span>
            <Svg w={21} h={21}><path d="M8 9l5-8 5 8M10 6h6M7 9.500h13M8 20l5-8 5 8M10 17h6M7 20.500h13M3 10v8" strokeWidth="1.400" /><path d="M0 12l3-4 3 4zM0 17l3 4 3-4z" {...F} /></Svg>
            <span className="whitespace-nowrap"><span className="text-[#2d8ceb]">100</span> <span className="text-base">像素</span></span>
            <span className="pl-[5px]"><Tri /></span>
            <Svg w={22} h={20}><path d="M1 2l4 10L9 2M8 14l5-14M11 13l4-11 5 11M12.500 9.500h5" strokeWidth="1.700" /><path d="M13 17.500h9" /><path d="M11 17.500l4-3v6z" {...F} /></Svg>
            <span className="col-span-2 pl-px text-base whitespace-nowrap text-[#484848]">度量标准</span>
            <span className="pl-[5px]"><Tri /></span>
            <Svg w={24} h={22}><path d="M1 0h23v14H1z" {...F} /><path d="M3 2l4 10 4-10M12 12l4-10 5 10M13.500 9h5" stroke="#232323" strokeWidth="1.800" /><path d="M3 19h19" /><path d="M1 19l4-3v6zM24 19l-4-3v6z" {...F} /></Svg>
            <span className="text-[#2d8ceb]">600</span>
            <span className="pl-[5px]"><Tri /></span>
          </div>
        </div>
      </div>
      <div className="w-[11px] bg-[#1b1b1b]"><div className="h-[244px] rounded-full bg-[#323232]" /></div>
    </aside>
  );
}

/* ---------- timeline ---------- */
/* switches: e = empty cell, - = nothing, s/f = shy open/hidden, u = sun, l = quality line, c = cube */
const LAYERS = [
  { n: 1, color: "bg-[#b63838]", bar: "bg-[#7a3939]", kind: "T", name: "Lorem i...t amet", av: "v-ee", sw: "sul--eec", short: true },
  { n: 2, color: "bg-[#677de0]", bar: "bg-[#525c8b]", kind: "box", name: "摄像机控制", av: "e--e", sw: "fel--eec" },
  { n: 3, color: "bg-[#e5bcc9]", bar: "bg-[#937e84]", kind: "cam", name: "摄像机 1", av: "e--e", sw: "f-------", parent: "2. 摄像机控制" },
  { n: 4, color: "bg-[#b63838]", kind: "T", name: "Lorem i...tor. 6", av: "v-ee", sw: "ful--eec", open: true },
  { n: 5, color: "bg-[#b63838]", kind: "T", name: "Lorem i...tor. 5", av: "v-ee", sw: "ful--eec", open: true, outline: true },
  { n: 6, color: "bg-[#b63838]", kind: "T", name: "Lorem i...tor. 4", av: "v-ee", sw: "ful--eec", open: true },
  { n: 7, color: "bg-[#e8920d]", bar: "bg-[#8c6122]", kind: "T", name: "Lorem i...tor. 7", av: "e--e", sw: "sul--eec" },
  { n: 8, color: "bg-[#677de0]", bar: "bg-[#525c8b]", kind: "T", name: "Lorem i...ortor.", av: "e--e", sw: "sul--eec" },
  { n: 9, color: "bg-[#a9a9ca]", bar: "bg-[#75748a]", kind: "box", name: "[白底]", av: "v-ee", sw: "sel--eee" },
  { n: 10, color: "bg-[#b4c9b4]", bar: "bg-[#758577]", kind: "wav", name: "[fin.wav]", av: "-aee", sw: "s-l---e-" },
];
const GLYPH = { v: <Eye />, a: <Speaker />, s: <Shy />, f: <Shy flat />, u: <Sun dim />, l: <Slash />, c: <Cube /> };

function Cell({ code, lit }) {
  const bg = code === "-" ? "" : lit ? "bg-[#333]" : "bg-[#222]";
  return <span className={`flex h-4 w-[17px] shrink-0 items-center justify-center text-[#c0c0c0] ${bg}`}>{GLYPH[code]}</span>;
}

function KindIcon({ kind }) {
  if (kind === "box") return <span className="h-5 w-[21px] border border-black bg-white" />;
  if (kind === "cam") return <Svg w={16} h={12} className="ml-[2px]"><path d="M0 1h10v10H0zM10 6l6-5v10z" {...F} /></Svg>;
  if (kind === "wav")
    return <Svg w={16} h={19} className="ml-[2px]"><path d="M1 0h11l3 3v16H1z" fill="#fff" stroke="none" /><circle cx="8" cy="10" r="4" stroke="#4a3558" strokeWidth="3" /><path d="M5 7.500q3-3 6 0" stroke="#e07030" strokeWidth="2" /></Svg>;
  return <Svg w={12} h={13} className="ml-[5px]"><path d="M0 0h12v3.500h-1L10 1.500H7v10l2 .5v1H3v-1l2-.5v-10H2L1 3.500H0z" {...F} /></Svg>;
}

function TrackRow({ bg, children }) {
  return (
    <>
      <div className={`min-w-0 flex-1 border-b border-l border-b-[#272727] border-l-black px-2 ${bg}`}>{children}</div>
      <div className="w-[19px] shrink-0 border-l border-black bg-[#232323]" />
    </>
  );
}

function LayerRow({ layer }) {
  const sel = layer.open;
  const nameStyle = layer.outline
    ? "border-2 border-[#9e9e9e] text-[#c8c8c8] pl-px pt-[5px]"
    : sel
      ? "bg-[#9e9e9e] text-[#1a1a1a] pl-[3px] pt-[7px]"
      : "text-[#c8c8c8] pl-[3px] pt-[7px]";
  return (
    <div className="flex h-[25px]">
      <div className={`flex w-[704px] shrink-0 border-b border-[#252525] pl-[7px] ${sel ? "bg-[#484848]" : "bg-[#303030]"}`}>
        <div className="flex gap-[2px] pt-1">
          {[...layer.av].map((c, i) => <Cell key={i} code={c} lit={sel} />)}
        </div>
        <span className="flex w-[27px] items-center justify-center pl-1 text-[#8f8f8f]">{sel ? <Chevron w={9} /> : <ChevRight />}</span>
        <span className={`mt-[2px] h-5 w-[19px] ${layer.color}`} />
        <b className={`w-[44px] pt-[5px] pl-[7px] text-[14px] leading-[18px] text-[#c0c0c0] ${MONO}`}>{layer.n}</b>
        <span className="flex w-6 items-center text-[#c0c0c0]"><KindIcon kind={layer.kind} /></span>
        <b className={`flex w-[145px] items-center overflow-hidden text-[13px] leading-none whitespace-pre ${MONO} ${nameStyle}`}>
          <span className={/[\u4e00-\u9fff]/.test(layer.name) ? "text-[15px]" : ""}>{layer.name}</span>
        </b>
        <div className="flex w-[205px] gap-[2px] pt-1 pl-[6px]">
          {[...layer.sw].map((c, i) => <Cell key={i} code={c} lit={sel} />)}
        </div>
        <span className="w-[22px] pt-[5px]"><Spiral /></span>
        <span className="relative mt-px flex h-[22px] w-[111px] items-center">
          <select aria-label={`图层 ${layer.n} 父级`} className="h-full w-full appearance-none bg-[#1c1c1c] pr-4 pl-2 text-[15px] leading-none text-[#c0c0c0]">
            <option>{layer.parent || "无"}</option>
          </select>
          <Chevron className="pointer-events-none absolute right-[5px] text-[#999]" />
        </span>
      </div>
      <TrackRow bg={sel ? "bg-[#4b4b4b]" : "bg-[#3a3a3a]"}>
        {sel ? (
          <div className="mt-[2px] mr-px h-[21px] border-t-2 border-[#c08080] bg-linear-to-b from-[#b04848] to-[#8c3d3d]">
            <svg className="block h-full w-full" aria-hidden="true">
              <rect width="100%" height="100%" filter="url(#grain)" opacity=".14" />
              <rect x="53.300%" width="1" height="100%" fill="#7d2f2f" />
            </svg>
          </div>
        ) : (
          <div className={`mt-[2px] h-5 ${layer.bar} ${layer.short ? "w-[39.7%]" : "mr-px"}`} />
        )}
      </TrackRow>
    </div>
  );
}

const Hourglass = () => <Svg w={12} h={12} className="text-[#b5b5b5]"><path d="M0 0h12v2L8 6l4 4v2H0v-2l4-4-4-4z" {...F} /></Svg>;

function PropRows({ n }) {
  return (
    <>
      <div className="flex h-[25px]">
        <div className="flex w-[704px] shrink-0 items-center border-b border-[#202020] bg-[#272727] pl-[7px]">
          <span className="flex h-[17px] w-[17px] items-center justify-center bg-[#1a1a1a] text-[#c0c0c0]"><Eye /></span>
          <Chevron w={9} className="ml-[146px] text-[#999]" />
          <span className="ml-[13px] text-[14px] leading-none text-[#b4b4b4]">范围选择器 1</span>
        </div>
        <TrackRow bg="bg-[#333]">
          <Svg w={9} h={15} className="mt-1 -ml-[3px]"><path d="M1 1h7M1 14h7" /><path d="M4 1v13" strokeWidth="3" /></Svg>
        </TrackRow>
      </div>
      <div className="flex h-[25px]">
        <div className="flex w-[704px] shrink-0 items-center border-b border-[#202020] bg-[#272727] pl-[11px]">
          <Svg w={9} h={11} className="text-[#4a4a4a]"><path d="M8 0v11L0 5.500z" {...F} /></Svg>
          <Svg w={17} h={19} className="ml-[6px]"><path d="M.5.5h16v18H.5z" stroke="#333" strokeWidth="1" /><path d="M8.500 3.500l5.500 6-5.500 6-5.500-6z" fill="#2d8ceb" stroke="none" /></Svg>
          <Svg w={9} h={11} className="ml-[7px]"><path d="M0 0v11l8-5.500z" {...F} /></Svg>
          <span className="ml-[136px] h-[3px] w-[2px] bg-[#444]" />
          <Svg w={19} h={21} className="ml-[16px] text-[#2d8ceb]"><path d="M.5.5h18v20H.5z" stroke="#333" strokeWidth="1" /><circle cx="9.500" cy="12" r="6" strokeWidth="1.800" /><path d="M7 2.500h5M9.500 3v3M3 5l2 2M9 13l3-4" strokeWidth="1.800" /></Svg>
          <Svg w={15} h={14} className="ml-[5px] text-[#8f8f8f]"><path d="M1 0v13h14M1 9l4-4 4 4 5-6" strokeWidth="1.300" /></Svg>
          <span className="ml-[9px] w-[86px] text-[14px] leading-none text-[#b4b4b4]">偏移</span>
          <label className="flex w-[213px] items-center pt-[3px]">
            <input aria-label={`图层 ${n} 偏移`} defaultValue="-20" className={`w-[22px] bg-transparent text-[12px] text-[#2d8ceb] ${MONO}`} />
            <span className={`text-[11px] text-[#b4b4b4] ${MONO}`}>%</span>
          </label>
          <span className="pb-1"><Spiral /></span>
        </div>
        <TrackRow bg="bg-[#333]">
          <div className="-mx-[5px] flex h-full items-center justify-between"><Hourglass /><Hourglass /></div>
        </TrackRow>
      </div>
    </>
  );
}

const TICKS = ["52:28f", "52:58f", "53:28f", "53:58f", "54:28f", "54:58f", "55:28f", "55:58f", "56:28f", "56:58f", "57:28f", "57:58f", "58:28f", "58:58f"];
const MARKERS = [[0.1, "4"], [8.3, "5"], [11.0, "7"], [16.9, "6"], [79.6, "8"], [83.4, "9"]];

function TimeRuler() {
  return (
    <div className="flex min-w-0 flex-1">
      <div className="flex min-w-0 flex-1 flex-col border-l border-black">
        <div className="mt-[2px] flex h-[12px] items-center border-y border-[#111] bg-[#232323]">
          <span className="h-[10px] w-2 rounded-l-full bg-[#2d8ceb]" />
          <span className="h-[10px] flex-1 bg-[#666]" />
          <span className="ml-[2px] h-[10px] w-[7px] rounded-r-full bg-[#2d8ceb]" />
        </div>
        <div className="relative h-[25px] overflow-hidden bg-[#212121]">
          <div className="absolute inset-y-0 right-2 left-2">
            {TICKS.map((t, i) => (
              <span
                key={t}
                className={`absolute bottom-0 flex w-[50px] -translate-x-1/2 flex-col items-center text-[12px] leading-none text-[#b0b0b0] ${MONO}`}
                style={{ left: `${0.1 + i * 7.655}%` }}
              >
                <span className="pb-[2px]">{t}</span>
                <span className="h-[6px] w-px bg-[#8a8a8a]" />
              </span>
            ))}
          </div>
        </div>
        <div className="relative flex h-5 border-y border-black">
          <span className="w-2 rounded-l-md bg-[#2d8ceb]" />
          <span className="flex-1 bg-[#606060]" />
          <span className="w-[9px] rounded-r-md border-l-2 border-black bg-[#2d8ceb]" />
          <div className="absolute inset-y-0 right-2 left-2">
            {MARKERS.map(([x, t]) => (
              <span key={t} className="absolute top-0 flex" style={{ left: `${x}%` }}>
                <span className="flex h-[15px] w-[23px] items-center justify-center border-r border-b border-[#2a2a2a] bg-[#b5b5b5] font-['Liberation_Serif',serif] text-[14px] leading-none text-[#1c1c1c]">{t}</span>
                <Svg w={14} h={12} className="absolute top-[7px] -left-[7px] text-[#b5b5b5]"><path d="M1 11.500V6.500L7 .8l6 5.700v5z" fill="currentColor" stroke="#222" strokeWidth="1" /></Svg>
              </span>
            ))}
          </div>
        </div>
        <div className="relative h-[5px] border-b border-black bg-[#232323]">
          <div className="absolute inset-y-0 right-2 left-2">
            {[0, 1.3, 31.4, 32.2].map((x) => (
              <span key={x} className="absolute top-0 h-1 w-[3px] bg-[#12b81e]" style={{ left: `${x}%` }} />
            ))}
          </div>
        </div>
      </div>
      <div className="w-[19px] shrink-0 pt-[41px] pl-[5px]">
        <Svg w={14} h={18} className="text-[#b0b0b0]"><path d="M0 0h14v11l-6 7-8-7z" {...F} /></Svg>
      </div>
    </div>
  );
}

function Timeline() {
  return (
    <section className="flex flex-1 flex-col bg-[#232323]">
      <nav className="flex h-10 shrink-0 items-start pl-[33px] text-[14px] text-[#8c8c8c]">
        <a href="#tab-fin" className="flex h-[33px] w-[113px] items-center gap-[15px]"><span className="h-3 w-[13px] bg-[#ae9a78]" />fin</a>
        <a href="#tab-1415" className="flex h-[33px] w-[111px] items-center gap-[14px]"><span className="h-3 w-[13px] bg-[#ae9a78]" />14-15</a>
        <a href="#tab-15" className="flex h-[33px] w-[83px] items-center border-b-2 border-[#b5b5b5] text-[#c0c0c0]">
          <span className="w-[19px] pt-[2px]"><CloseX /></span>
          <span className="mr-[14px] h-3 w-3 bg-[#ae9a78]" />15
          <Menu className="ml-auto" />
        </a>
      </nav>
      <div className="relative">
        <div className="flex h-16">
          <div className="flex w-[704px] shrink-0 flex-col">
            <div className="flex h-[39px] items-center pb-[5px] pl-[15px]">
              <div className="w-[139px] pt-[2px]">
                <b className="block pl-[14px] text-[17px] leading-[19px] text-[#2d8ceb]">0:00:52:28</b>
                <span className={`block text-[11px] leading-[18px] whitespace-nowrap text-[#1f66b0] ${MONO}`}>03148 (60.00 fps)</span>
              </div>
              <label className="mr-[21px] flex h-6 w-[297px] items-center rounded-sm border border-[#2e2e2e] bg-[#151515] pl-[7px]">
                <SearchDrop />
                <input aria-label="搜索图层" className="min-w-0 flex-1 bg-transparent" />
              </label>
              <Svg w={22} h={18}><path d="M0 1h7v4H0zM14 5h6v4h-6zM14 11h6v4h-6zM16 15h6l-3 3z" {...F} /><path d="M7 3h7M11 3v10h3M11 7h3" /></Svg>
              <Svg w={24} h={22} className="ml-[17px]"><path d="M7 0v12M1 6h12M3 2l8 8M11 2l-8 8" strokeWidth="1.200" /><path d="M15 7l7 3.500v7L15 21l-7-3.500v-7z" fill="#232323" /><path d="M8 10.500l7 3.500 7-3.500M15 14v7" /></Svg>
              <Svg w={22} h={17} className="ml-[20px]"><path d="M0 8h22v9H0z" fill="#666" stroke="none" /><path d="M4 6Q5 1 11 1t7 5z" /><path d="M11 2v12" strokeWidth="2.500" /><path d="M2 9.500h5V6M20 9.500h-5V6" /></Svg>
              <span className="ml-[13px]"><Film w={18} /></span>
              <span className="ml-[14px]"><Blur w={19} /></span>
              <Svg w={22} h={20} className="ml-[21px]"><path d="M2 4h18v15H2zM0 4h3M0 19h3M6 0v4M11 0v4M16 0v4M4 7q4 0 7 5t7 4" strokeWidth="1.300" /></Svg>
            </div>
            <div className="flex h-[25px] items-center border-y border-black bg-[#323232] pl-[7px] text-base leading-none text-[#a8a8a8]">
              <div className="flex w-[79px] gap-[2px] border-r border-[#1c1c1c]">
                {[<Eye />, <Speaker />, <Svg w={10}><circle cx="5" cy="5" r="4.500" {...F} /></Svg>, <Lock />].map((g, i) => (
                  <span key={i} className="flex h-4 w-[17px] shrink-0 items-center justify-center">{g}</span>
                ))}
              </div>
              <span className="flex h-4 w-[40px] items-center justify-end border-r border-[#1c1c1c] pr-[6px]"><Tag /></span>
              <span className="h-4 w-[42px] border-r border-[#1c1c1c] pl-[7px] text-[14px] leading-4 italic">#</span>
              <span className="h-[17px] w-[172px] border-r border-[#1c1c1c] pl-[6px]">图层名称</span>
              <div className="flex w-[198px] gap-[2px] border-r border-[#1c1c1c] pl-[6px]">
                {[<Shy />, <Sun />, <Svg w={14}><path d="M1 1l12 12" strokeWidth="2" strokeDasharray="4 1.500" /></Svg>, <i className="font-['Liberation_Serif',serif] text-[17px] leading-none">fx</i>, <Film />, <Blur />, <Adjust />, <Cube />].map((g, i) => (
                  <span key={i} className="flex h-4 w-[17px] shrink-0 items-center justify-center">{g}</span>
                ))}
              </div>
              <span className="h-[17px] w-[146px] border-r border-[#1c1c1c] pl-[7px]">父级和链接</span>
            </div>
          </div>
          <TimeRuler />
        </div>
        <div className="relative">
          {LAYERS.map((l) => (
            <React.Fragment key={l.n}>
              <LayerRow layer={l} />
              {l.open && <PropRows n={l.n} />}
            </React.Fragment>
          ))}
          <Svg w={18} h={17} className="absolute top-[3px] right-0 text-[#b0b0b0]"><path d="M8 3h10v9H8z" {...F} /><path d="M1 11L8 1v10z" fill="#232323" /><circle cx="9" cy="12" r="3.500" fill="#232323" strokeWidth="2" /></Svg>
          <div className="pointer-events-none absolute top-[69px] right-[18px] left-[100px] h-[236px] border-4 border-[#ed1c24]" />
        </div>
        <div className="pointer-events-none absolute top-[20px] bottom-0 left-[707px] flex w-[15px] flex-col items-center">
          <Svg w={15} h={17}><path d="M0 0h15v9l-7.500 8L0 9z" fill="#2d8ceb" stroke="none" /><path d="M5 7h5M7.500 7v10" stroke="#12406f" strokeWidth="1.200" /></Svg>
          <span className="w-px flex-1 bg-[#2d8ceb]" />
        </div>
      </div>
      <div className="min-h-[9px] flex-1" />
      <div className="h-px shrink-0 bg-black" />
      <div className="h-px shrink-0" />
    </section>
  );
}

export default function App() {
  return (
    <main className={`flex min-h-screen flex-col overflow-hidden bg-[#161616] text-[#a8a8a8] ${SANS}`}>
      <svg className="absolute h-0 w-0" aria-hidden="true">
        <filter id="grain">
          <feTurbulence type="fractalNoise" baseFrequency=".35" numOctaves="2" />
          <feColorMatrix type="saturate" values="0" />
        </filter>
      </svg>
      <Toolbar />
      <div className="mt-[3px] mb-[6px] flex h-[401px] shrink-0 gap-[6px]">
        <ProjectPanel />
        <MotionPanel />
        <CompPanel />
        <SidePanels />
      </div>
      <Timeline />
    </main>
  );
}
